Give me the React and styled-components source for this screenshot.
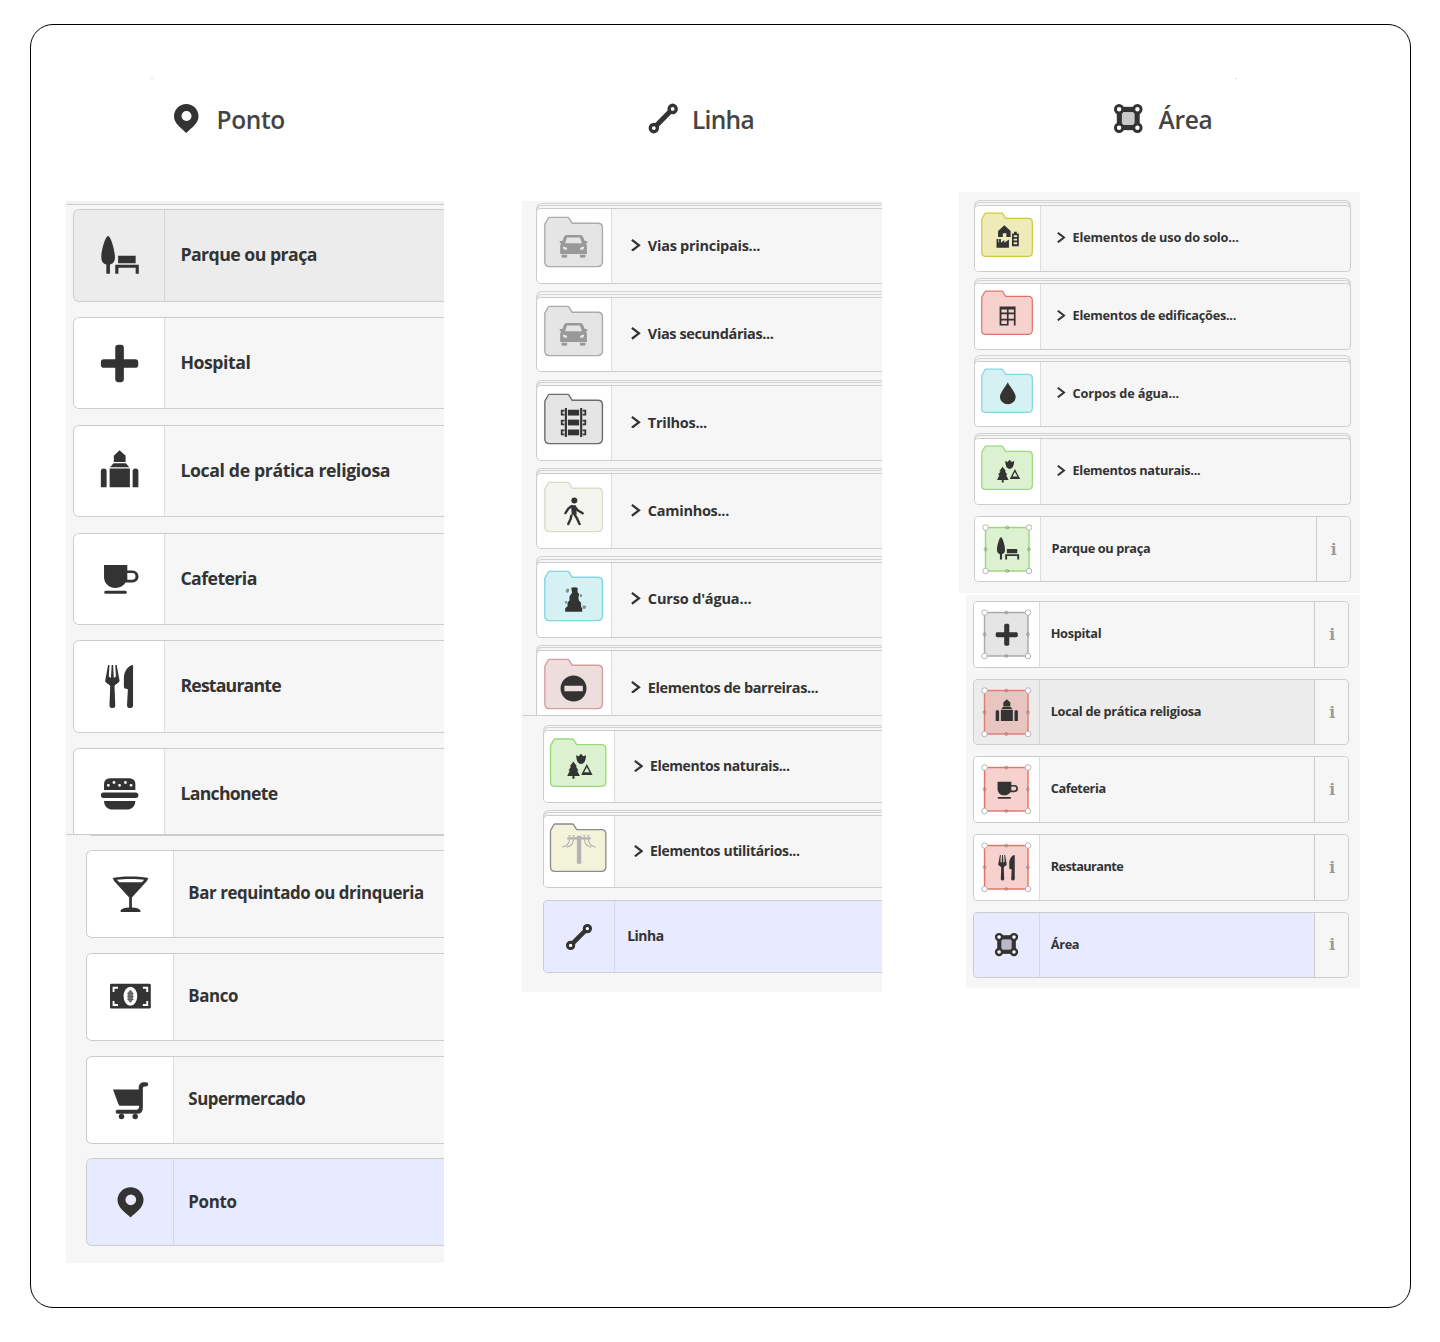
import React from "react";
import styled, { createGlobalStyle, css, ThemeProvider } from "styled-components";

/* Every list is drawn at its own zoom: theme.u is the pixel size of one design unit. */
const u = (n) => ({ theme }) => `${(n * theme.u).toFixed(3)}px`;

const GlobalStyle = createGlobalStyle`
  *, *::before, *::after { box-sizing: border-box; }
  body { margin: 0; background: #fff; font-family: "Open Sans", "Noto Sans", sans-serif; color: #333; }
`;

const Page = styled.div`
  height: 1342px;
  padding: 24px 29px 34px 30px;
`;

const Frame = styled.main`
  height: 1284px;
  border: 1px solid #000;
  border-radius: 23px;
  padding: 53px 0 0 35px;
  display: grid;
  grid-template-columns: 378px 360px 401px;
  column-gap: 77.5px;
  align-items: start;
`;

const Column = styled.section`
  display: flex;
  flex-direction: column;
`;

const Speck = styled.span`
  width: 2px;
  height: 1px;
  margin-left: ${(p) => p.$left}px;
  background: ${(p) => (p.$left ? "#ddd" : "transparent")};
`;

const Header = styled.header`
  display: flex;
  align-items: center;
  height: 29px;
  margin: 25px 0 ${(p) => p.$below}px ${(p) => p.$left}px;
`;

const Title = styled.h2`
  margin: 2px 0 0 ${(p) => p.$gap}px;
  font-size: 24.5px;
  line-height: 29px;
  font-weight: 600;
  color: #444;
  letter-spacing: ${(p) => p.$track || 0}px;
`;

const Panel = styled.div`
  height: ${(p) => p.$height}px;
  margin: ${(p) => p.$margin || "0"};
  background: #f6f6f6;
  overflow: hidden;
  border-top: ${(p) => (p.$rule ? "1px solid #ccc" : "0")};
`;

const TopRule = styled.div`
  height: 4px;
  background: #f1f1f1;
  border-bottom: 1px solid #ccc;
`;

const CutEdge = styled.div`
  height: 1px;
  margin-left: 24px;
  background: #ccc;
`;

const List = styled.ul`
  list-style: none;
  margin: 0;
  padding: ${(p) => p.$pad};
`;

const tones = {
  plain: { bg: "#f6f6f6", cell: "#fff", line: "#ddd" },
  hover: { bg: "#ececec", cell: "#ececec", line: "#d4d4d4" },
  selected: { bg: "#e8eaff", cell: "#e8eaff", line: "#d4d6ea" },
};

const openEdge = css`
  border-right: 0;
  border-top-right-radius: 0;
  border-bottom-right-radius: 0;
`;

const Row = styled.li`
  position: relative;
  isolation: isolate;
  height: ${u(60)};
  margin-bottom: ${u(10)};
  display: flex;
  background: ${(p) => tones[p.$tone].bg};
  border: 1px solid #ccc;
  border-radius: ${u(4)};
  ${(p) => p.$open && openEdge}
`;

const layer = css`
  content: "";
  position: absolute;
  left: 0;
  right: 0;
  height: 12px;
  z-index: -1;
  background: #f6f6f6;
  border: 1px solid #d2d2d2;
  border-bottom: 0;
  border-radius: 6px 6px 0 0;
  ${(p) => p.$open && openEdge}
`;

const Stack = styled.li`
  position: relative;
  isolation: isolate;
  list-style: none;
  margin-bottom: ${u(10)};
  ${Row} {
    margin: 0;
    isolation: auto;
    z-index: 1;
  }
  &::before {
    ${layer}
    top: -5.5px;
  }
  &::after {
    ${layer}
    top: -3px;
  }
`;

const IconCell = styled.div`
  flex: none;
  width: ${u(59)};
  display: grid;
  place-items: center;
  place-content: center;
  background: ${(p) => tones[p.$tone].cell};
  border-right: 1px solid ${(p) => tones[p.$tone].line};
  border-radius: ${u(3.3)} 0 0 ${u(3.3)};
  & > svg {
    grid-area: 1 / 1;
    display: block;
    overflow: visible;
  }
`;

const Glyph = styled.svg`
  width: ${(p) => u(p.$size)};
  height: ${(p) => u(p.$size)};
  fill: currentColor;
  color: ${(p) => p.$color || "#333"};
`;

const Backdrop = styled.svg`
  width: ${u(60)};
  height: ${u(60)};
`;

const Label = styled.span`
  flex: 1;
  align-self: center;
  padding: 0 0 1.4px ${u(9.9)};
  font-size: ${u(11.5)};
  font-weight: 700;
  line-height: 1.2;
  white-space: nowrap;
  letter-spacing: ${(p) => p.$track}em;
`;

const Chevron = styled.svg`
  flex: none;
  align-self: center;
  width: ${u(8)};
  height: ${u(10)};
  margin-left: ${u(15.2)};
  margin-top: -2px;
  & + ${Label} {
    padding-left: ${u(5.6)};
  }
`;

const Info = styled.button`
  flex: none;
  width: ${u(31)};
  padding: 0 0 2px 1px;
  border: 0;
  border-left: 1px solid #ccc;
  border-radius: 0 ${u(3.3)} ${u(3.3)} 0;
  background: #f6f6f6;
  color: #999;
  font: bold 17px "Noto Serif", "DejaVu Serif", serif;
`;

const HeadIcon = styled.svg`
  flex: none;
  width: ${(p) => p.$w}px;
  height: 29px;
  fill: currentColor;
  color: #333;
  overflow: visible;
`;

const pin = (
  <path
    fillRule="evenodd"
    d="M7.5 1.9A4.75 4.75 0 0 0 2.75 6.6C2.75 9.5 5.6 11.1 7.5 13C9.4 11.1 12.25 9.5 12.25 6.6A4.75 4.75 0 0 0 7.5 1.9zM7.6 4.55A1.95 1.95 0 1 1 7.6 8.45A1.95 1.95 0 1 1 7.6 4.55z"
  />
);
const line = (
  <g fill="none" stroke="currentColor">
    <path d="M4.7 10.3L10.3 4.7" strokeWidth="2" />
    <circle cx="3.8" cy="11.2" r="1.4" strokeWidth="1.3" fill="#fff" />
    <circle cx="11.2" cy="3.8" r="1.4" strokeWidth="1.3" fill="#fff" />
  </g>
);
const area = (
  <g fill="none" stroke="currentColor">
    <rect x="4" y="4" width="7" height="7" strokeWidth="2" fill="rgba(60,60,60,.28)" />
    {[[3.9, 3.9], [11.1, 3.9], [3.9, 11.1], [11.1, 11.1]].map(([x, y]) => (
      <circle key={x + "-" + y} cx={x} cy={y} r="1.45" strokeWidth="1.15" fill="#fff" />
    ))}
  </g>
);

const icons = {
  pin,
  line,
  area,
  park: (
    <g>
      <path d="M3.5.7C2.6.7 1.15 5.6 1.15 8.1C1.15 9.7 2 10.5 2.9 10.6V13.8H4.15V10.6C5.1 10.5 5.9 9.7 5.9 8.1C5.9 5.6 4.4.7 3.5.7z" />
      <path d="M7 7.6H13.1V10.2H7zM6 10.7H14.2V13.8H13.1V11.7H7.1V13.8H6z" />
    </g>
  ),
  cross: (
    <path d="M7 1C6.4 1 6 1.4 6 2V6H2C1.4 6 1 6.4 1 7V8C1 8.6 1.4 9 2 9H6V13C6 13.6 6.4 14 7 14H8C8.6 14 9 13.6 9 13V9H13C13.6 9 14 8.6 14 8V7C14 6.4 13.6 6 13 6H9V2C9 1.4 8.6 1 8 1z" />
  ),
  worship: (
    <path d="M7.5 .1L9.6 2V4.2H5.5V2zM5.4 4.6H9.7L10.9 6H4.2zM4.05 6.4H11.1V13H4.05zM1 7.4Q1 6.4 2 6.4T3 7.4V13H1zM12.05 7.4Q12.05 6.4 13.05 6.4T14.05 7.4V13H12.05z" />
  ),
  cafe: (
    <path
      fillRule="evenodd"
      d="M2.1 2.8H10.2V4.7H12A2.1 2.1 0 0 1 12 8.9H9.6C8.9 10 7.6 10.8 6.1 10.8C3.6 10.8 2.1 9 2.1 7zM10.2 5.6V7.9H11.9A1.15 1.15 0 0 0 11.9 5.6zM2.7 11.7H9.5A.55.55 0 0 1 9.5 12.8H2.7A.55.55 0 0 1 2.7 11.7z"
    />
  ),
  restaurant: (
    <g>
      <path d="M3.5 0L2.5 5.5C2.35 6.3 4.28 6.7 4.25 7.5L4 14C3.96 15 5 15 5 15S6.04 15 6 14L5.75 7.5C5.72 6.7 7.48 6.3 7.5 5.5L6.5 0H6L6.25 4L5.5 4.5L5.25 0H4.75L4.5 4.5L3.75 4L4 0z" />
      <path d="M12.2 0C10.8 0 9 2 9 4.6V7.6C9 8.2 9.4 8.3 10.4 8.4L10.1 14C10.1 15 11.1 15 11.1 15S12.2 15 12.2 14z" />
    </g>
  ),
  burger: (
    <path
      fillRule="evenodd"
      d="M4.1 1.8H11A2 2 0 0 1 13 3.8V5.9H2.1V3.8A2 2 0 0 1 4.1 1.8zM3.6 3.8A.5.5 0 1 0 3.6 4.8A.5.5 0 1 0 3.6 3.8zM5.55 2.8A.5.5 0 1 0 5.55 3.8A.5.5 0 1 0 5.55 2.8zM7.5 3.8A.5.5 0 1 0 7.5 4.8A.5.5 0 1 0 7.5 3.8zM9.55 2.8A.5.5 0 1 0 9.55 3.8A.5.5 0 1 0 9.55 2.8zM11.5 3.8A.5.5 0 1 0 11.5 4.8A.5.5 0 1 0 11.5 3.8zM1.95 6.8H13.1A.95.95 0 0 1 13.1 8.7H1.95A.95.95 0 0 1 1.95 6.8zM2.1 9.7H13C13 11.5 11.7 12.7 10 12.7H5.1C3.4 12.7 2.1 11.5 2.1 9.7z"
    />
  ),
  cocktail: (
    <path
      fillRule="evenodd"
      d="M1 1.5C3 .7 12 .7 14 1.5L13.5 2.6L8 8.6V12.2C9.6 12.3 10.7 12.6 11.1 13.2V13.9H3.9V13.2C4.3 12.6 5.4 12.3 7 12.2V8.6L1.5 2.6zM2.5 2.1L3.4 3H11.6L12.5 2.1C10 1.7 5 1.7 2.5 2.1z"
    />
  ),
  bank: (
    <g>
      <rect x="0" y="2.8" width="14.9" height="9.1" rx=".5" />
      <ellipse cx="7.45" cy="7.4" rx="2.5" ry="3.45" fill="#fff" />
      <ellipse cx="7.45" cy="7.4" rx="1" ry="2.3" fill="#777" />
      <path d="M6.3 6.3H8.6M6.3 7.4H8.6M6.3 8.5H8.6" stroke="#555" strokeWidth=".4" />
      <path
        d="M1.3 5.8V4.3H2.9M12 4.3H13.6V5.8M1.3 9.1V10.6H2.9M12 10.6H13.6V9.1"
        fill="none"
        stroke="#fff"
        strokeWidth=".7"
      />
    </g>
  ),
  cart: (
    <g>
      <path d="M1.1 3.8H10.5V3.1C10.5 1.8 11.4 1.2 12.5 1.2H13.2A.75.75 0 0 1 13.2 2.7H12.6Q12 2.7 12 3.3V10.4Q12 12.7 10 12.7H2.8A.75.75 0 0 1 2.8 11.2H9.8Q10.6 11.2 10.7 9.8H4Q3.2 9.8 3 9z" />
      <circle cx="4.2" cy="13.7" r="1" />
      <circle cx="9.2" cy="13.7" r="1" />
    </g>
  ),
  car: (
    <path
      fillRule="evenodd"
      d="M4 1.5H11Q12 1.5 12.4 2.4L13.3 4.6H14.3Q14.7 4.6 14.7 5.2T14.2 5.8H13.8Q14.4 6.4 14.4 7.3V11.3H.6V7.3Q.6 6.4 1.2 5.8H.8Q.3 5.8.3 5.2T.7 4.6H1.7L2.6 2.4Q3 1.5 4 1.5zM4.2 2.9L3.1 5.8H11.9L10.8 2.9zM2 7.6Q2 9.2 3.2 9.2H4.2V8.7Q4 7.8 2.9 7.6zM13 7.6Q13 9.2 11.8 9.2H10.8V8.7Q11 7.8 12.1 7.6zM1.3 11.8H4.2V12.6Q4.1 13.3 3.5 13.3H2Q1.4 13.3 1.3 12.6zM13.7 11.8H10.8V12.6Q10.9 13.3 11.5 13.3H13Q13.6 13.3 13.7 12.6z"
    />
  ),
  rail: (
    <g>
      <path d="M3 0H4.1V15H3zM10.9 0H12V15H10.9z" />
      {[0.9, 6, 11.1].map((y) => (
        <g key={y}>
          <rect x="4.6" y={y} width="5.8" height="3" />
          <path
            d={`M2.8 ${y + 0.5}H1.4V${y + 2.5}H2.8M12.2 ${y + 0.5}H13.6V${y + 2.5}H12.2`}
            fill="none"
            stroke="currentColor"
            strokeWidth=".9"
          />
        </g>
      ))}
    </g>
  ),
  walk: (
    <g>
      <circle cx="7.9" cy="1.8" r="1.55" />
      <path d="M6.2 4.2L8.6 4.2L9.2 9.1L6.6 9.2z" />
      <path
        d="M6.6 4.6L4.9 5.9L3.3 8.3M8.3 5.1L9.6 6.8L12.2 8.4M7.9 8.8L9.2 10.9L10.6 14M6.4 9.6L6 11.3L4.8 14"
        fill="none"
        stroke="currentColor"
        strokeWidth="1.25"
        strokeLinecap="round"
        strokeLinejoin="round"
      />
    </g>
  ),
  stream: (
    <g>
      <path d="M6.3 1.4Q8 .8 9.6 1.4V3.8L10.4 4.6L10 6.6L10.3 8L11.4 9.2V11.2L12 12.1V13.8H3.2V12L4.4 11V9L5.4 8V6L6 5L6.8 4z" />
      <g opacity=".5">
        <ellipse cx="4.4" cy="2.9" rx=".8" ry="1.1" transform="rotate(30 4.4 2.9)" />
        <ellipse cx="11.3" cy="5.5" rx=".6" ry=".8" />
        <ellipse cx="3.6" cy="8.9" rx=".55" ry=".8" />
        <ellipse cx="13" cy="11.4" rx="1" ry="1" />
      </g>
    </g>
  ),
  barrier: (
    <path fillRule="evenodd" d="M7.5.8A6.7 6.7 0 1 1 7.5 14.2A6.7 6.7 0 1 1 7.5.8zM2.8 6.1V8.9H12.3V6.1z" />
  ),
  nature: (
    <g>
      <path d="M6 1.2L7.4 1.8L8.6.4L9.8 1.8L11.3 1.2Q11.2 5.7 8.6 5.9Q6.1 5.7 6 1.2z" />
      <path d="M4.5 4.6L6.5 7.2H5.8L7.3 9.4H6.5L8 12.4H5.1V13.8H4V12.4H1.2L2.6 9.4H1.8L3.3 7.2H2.5z" />
      <path fillRule="evenodd" d="M11.7 5.9L14.8 11.8H8.7zM11.7 7.7L10.3 10.3H13.2z" />
    </g>
  ),
  utility: (
    <g>
      <path d="M6.4-1.2H8.7V13.8H6.4zM1.2-.4H13.8V.8H1.2zM1.8-1.5H3V-.8H1.8zM4-1.5H5.2V-.8H4zM9.8-1.5H11V-.8H9.8zM12-1.5H13.2V-.8H12z" />
      <path
        d="M2.4.6Q2.4 4.2-1.4 4.9M4.6.6Q4.6 4.2.9 4.9M10.4.6Q10.4 4.2 14.1 4.9M12.6.6Q12.6 4.2 16.4 4.9"
        fill="none"
        stroke="currentColor"
        strokeWidth=".6"
      />
    </g>
  ),
  landuse: (
    <path
      fillRule="evenodd"
      d="M5.5-.4L9.2 2.9V6.4H6.7V4.3H4.6V6.4H1.8V2.9zM.9 7.6H2V9.8H2.4V7.6H3.5V9.9L5.5 8.3V9.9L8.2 8V12.8H.9zM11.2 3.4H12.8V4.4H14V11.9H10V4.4H11.2zM11 5.5V6.5H13V5.5zM11 7.5V8.5H13V7.5zM11 9.6V10.7H13V9.6z"
    />
  ),
  building: (
    <path
      fillRule="evenodd"
      d="M2.7 1.5H12.1V12.7H11.1V9.7H8V12.7H2.7zM3.8 3.3V5H7V3.3zM8 3.3V5H11.1V3.3zM3.8 6V8.7H7V6zM8 6V8.7H11.1V6zM3.8 9.7V11.7H7V9.7z"
    />
  ),
  drop: <path d="M7.5.7C8.6 3.2 12.2 6.8 12.2 9.3A4.65 4.4 0 0 1 2.9 9.3C2.9 6.8 6.4 3.2 7.5.7z" />,
};

const swatches = {
  gray: ["#e5e5e5", "#aaa"],
  dark: ["#e5e5e5", "#6b6b6b"],
  path: ["#f4f5ee", "#dcdccb"],
  water: ["#d6f1f4", "#81d7e0"],
  barrier: ["#eedddd", "#d29f9f"],
  green: ["#dcf1d0", "#98da77"],
  utility: ["#f3f3d9", "#8c8c8c"],
  yellow: ["#eeebb9", "#cdc93c"],
  red: ["#f6d1cd", "#e27467"],
  redHover: ["#e9c5c1", "#df7d72"],
};

const Folder = ({ swatch }) => (
  <Backdrop viewBox="0 0 60 60">
    <path
      d="M7.2 12.4L9.8 7.9Q10.1 7.4 10.8 7.4H25Q25.7 7.4 26 7.9L28.6 12.1H49Q52.6 12.1 52.6 15.7V42.6Q52.6 46.4 48.8 46.4H10.6Q7 46.4 7 42.8V13.2Q7 12.8 7.2 12.4z"
      fill={swatches[swatch][0]}
      stroke={swatches[swatch][1]}
      strokeWidth="1.1"
    />
  </Backdrop>
);

const VertexSquare = ({ swatch }) => {
  const [a, m, b] = [10.4, 30, 49.6];
  return (
    <Backdrop viewBox="0 0 60 60">
      <rect x={a} y={a} width={b - a} height={b - a} fill={swatches[swatch][0]} stroke={swatches[swatch][1]} strokeWidth="1.3" />
      <g stroke="#777" strokeOpacity=".6" fill="none" strokeWidth=".9">
        {[[m, a], [a, m], [b, m], [m, b]].map(([x, y]) => (
          <circle key={x + "-" + y} cx={x} cy={y} r="1.3" />
        ))}
      </g>
      <g stroke="#b5b5b5" fill="#fff" strokeWidth=".9">
        {[[a, a], [b, a], [a, b], [b, b]].map(([x, y]) => (
          <circle key={x + "-" + y} cx={x} cy={y} r="2.5" />
        ))}
      </g>
    </Backdrop>
  );
};

const Preset = ({ icon, label, track = -0.025, tone = "plain", swatch, info, open, folder, color }) => {
  const row = (
    <Row as={folder ? "div" : "li"} $tone={tone} $open={open}>
      <IconCell $tone={tone}>
        {folder && <Folder swatch={swatch} />}
        {swatch && !folder && <VertexSquare swatch={swatch} />}
        <Glyph viewBox="0 0 15 15" $size={swatch ? 23 : 28} $color={color}>
          {icons[icon]}
        </Glyph>
      </IconCell>
      {folder && (
        <Chevron viewBox="0 0 8 10" fill="none" stroke="#333" strokeWidth="1.8">
          <path d="M.7.7L6.3 5L.7 9.3" />
        </Chevron>
      )}
      <Label $track={track}>{label}</Label>
      {info && <Info>i</Info>}
    </Row>
  );
  return folder ? <Stack $open={open}>{row}</Stack> : row;
};

const pointsTop = [
  { icon: "park", label: "Parque ou praça", tone: "hover", track: -0.03 },
  { icon: "cross", label: "Hospital" },
  { icon: "worship", label: "Local de prática religiosa", track: -0.021 },
  { icon: "cafe", label: "Cafeteria", track: -0.032 },
  { icon: "restaurant", label: "Restaurante", track: -0.046 },
  { icon: "burger", label: "Lanchonete", track: -0.04 },
];
const pointsBottom = [
  { icon: "cocktail", label: "Bar requintado ou drinqueria" },
  { icon: "bank", label: "Banco" },
  { icon: "cart", label: "Supermercado", track: -0.03 },
  { icon: "pin", label: "Ponto", tone: "selected", track: -0.02 },
];
const linesTop = [
  { icon: "car", label: "Vias principais...", swatch: "gray", color: "#999", track: -0.019 },
  { icon: "car", label: "Vias secundárias...", swatch: "gray", color: "#999", track: -0.028 },
  { icon: "rail", label: "Trilhos...", swatch: "dark", track: -0.02 },
  { icon: "walk", label: "Caminhos...", swatch: "path", track: -0.02 },
  { icon: "stream", label: "Curso d'água...", swatch: "water", track: -0.012 },
  { icon: "barrier", label: "Elementos de barreiras...", swatch: "barrier", track: -0.028 },
].map((p) => ({ ...p, folder: true }));
const linesBottom = [
  { icon: "nature", label: "Elementos naturais...", swatch: "green", folder: true, track: -0.027 },
  { icon: "utility", label: "Elementos utilitários...", swatch: "utility", folder: true, color: "#b3b3b3", track: -0.023 },
  { icon: "line", label: "Linha", tone: "selected", track: -0.035 },
];
const areasTop = [
  { icon: "landuse", label: "Elementos de uso do solo...", swatch: "yellow", folder: true, track: -0.0145 },
  { icon: "building", label: "Elementos de edificações...", swatch: "red", folder: true, track: -0.021 },
  { icon: "drop", label: "Corpos de água...", swatch: "water", folder: true, track: -0.008 },
  { icon: "nature", label: "Elementos naturais...", swatch: "green", folder: true, track: -0.026 },
  { icon: "park", label: "Parque ou praça", swatch: "green", info: true, track: -0.029 },
];
const areasBottom = [
  { icon: "cross", label: "Hospital", swatch: "gray" },
  { icon: "worship", label: "Local de prática religiosa", swatch: "redHover", tone: "hover", track: -0.023 },
  { icon: "cafe", label: "Cafeteria", swatch: "red", track: -0.032 },
  { icon: "restaurant", label: "Restaurante", swatch: "red", track: -0.046 },
  { icon: "area", label: "Área", tone: "selected" },
].map((p) => ({ ...p, info: true }));

const Presets = ({ items, unit, pad, open }) => (
  <ThemeProvider theme={{ u: unit }}>
    <List $pad={pad}>
      {items.map((p) => (
        <Preset key={p.label} {...p} open={open} />
      ))}
    </List>
  </ThemeProvider>
);

export default function App() {
  return (
    <>
      <GlobalStyle />
      <Page>
        <Frame>
          <Column>
            <Speck $left={85} />
            <Header $left={108} $below={68}>
              <HeadIcon $w={24.5} viewBox="2.75 1.9 9.5 11.1" preserveAspectRatio="none">{pin}</HeadIcon>
              <Title $gap={18} $track={-0.4}>Ponto</Title>
            </Header>
            <Panel $height={633}>
              <TopRule />
              <Presets items={pointsTop} unit={1.54} pad="4.3px 0 0 7.3px" open />
            </Panel>
            <Panel $height={429} $rule>
              <CutEdge />
              <Presets items={pointsBottom} unit={1.467} pad="14.3px 0 0 20.3px" open />
            </Panel>
          </Column>

          <Column>
            <Speck $left={0} />
            <Header $left={127} $below={68}>
              <HeadIcon $w={28.5} viewBox="1.9 1.9 11.2 11.2" preserveAspectRatio="none">{line}</HeadIcon>
              <Title $gap={15} $track={-0.7}>Linha</Title>
            </Header>
            <Panel $height={514}>
              <Presets items={linesTop} unit={1.263} pad="7.3px 0 0 14.5px" open />
            </Panel>
            <Panel $height={277} $rule>
              <Presets items={linesBottom} unit={1.214} pad="14.4px 0 0 21px" open />
            </Panel>
          </Column>

          <Column>
            <Speck $left={276} />
            <Header $left={155} $below={59}>
              <HeadIcon $w={28.5} viewBox="1.9 1.9 11.2 11.2" preserveAspectRatio="none">{area}</HeadIcon>
              <Title $gap={16} $track={-0.3}>Área</Title>
            </Header>
            <Panel $height={401}>
              <Presets items={areasTop} unit={1.109} pad="13.4px 9px 0 15.2px" />
            </Panel>
            <Panel $height={393} $margin="2px 0 0 7px">
              <Presets items={areasBottom} unit={1.109} pad="6.2px 10.6px 0 7.3px" />
            </Panel>
          </Column>
        </Frame>
      </Page>
    </>
  );
}
